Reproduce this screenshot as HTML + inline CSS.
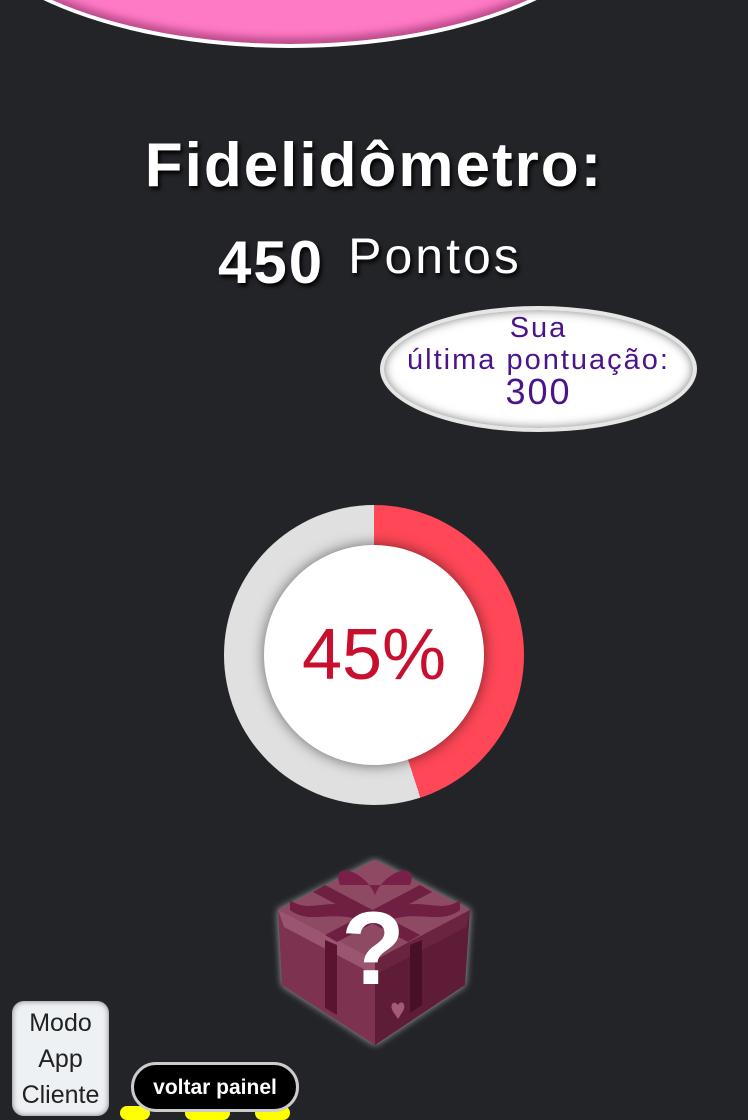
<!DOCTYPE html>
<html><head><meta charset="utf-8"><style>
html,body{margin:0;padding:0;}
body{width:748px;height:1116px;background:#232428;position:relative;overflow:hidden;font-family:"Liberation Sans",sans-serif;}
.pink{position:absolute;left:-50px;top:-260px;width:680px;height:308px;border-radius:50%;background:#ff7ac5;border:4px solid #fff;box-sizing:border-box;box-shadow:inset 0 -6px 8px rgba(120,30,80,.5);}
.t1{position:absolute;left:0;width:748px;top:130px;text-align:center;color:#fff;font-size:62px;font-weight:bold;text-shadow:2px 3px 4px #000;letter-spacing:2px;}
.t2{position:absolute;left:218px;top:228px;color:#fff;text-shadow:2px 3px 4px #000;white-space:nowrap;}
.t2 b{font-size:60px;letter-spacing:2px;}
.t2 span{font-size:50px;margin-left:24px;position:relative;top:-10px;letter-spacing:3px;}
.bub{position:absolute;left:380px;top:306px;width:317px;height:126px;border-radius:50%;background:#fff;border:4px solid #e6e6e6;box-sizing:border-box;box-shadow:inset 0 0 10px rgba(0,0,0,.5);color:#4a148c;text-align:center;font-size:29px;line-height:32px;padding-top:2px;letter-spacing:2px;white-space:nowrap;}
.bub b{font-size:36px;font-weight:normal;}
.ring{position:absolute;left:224px;top:505px;width:300px;height:300px;border-radius:50%;background:conic-gradient(#ff4757 0deg 162deg,#e0e0e0 162deg 360deg);}
.inner{position:absolute;left:40px;top:40px;width:220px;height:220px;border-radius:50%;background:#fff;box-shadow:0 0 14px rgba(0,0,0,.55);text-align:center;line-height:220px;color:#c8102e;font-size:72px;}
.modo{position:absolute;left:12px;top:1001px;width:97px;height:115px;background:#eef1f3;border-radius:12px;box-shadow:inset 0 0 6px rgba(0,0,0,.5);text-align:center;font-size:25px;line-height:36px;color:#222;padding-top:4px;box-sizing:border-box;}
.volt{position:absolute;left:131px;top:1062px;width:168px;height:50px;background:#000;border:3px solid #ccc;border-radius:25px;box-sizing:border-box;color:#fff;font-weight:bold;font-size:21px;text-align:center;line-height:46px;}
.yel{position:absolute;top:1106px;height:14px;background:#ff0;border-radius:8px;}
</style></head><body>
<div class="pink"></div>
<div class="t1">Fidelidômetro:</div>
<div class="t2"><b>450</b><span>Pontos</span></div>
<div class="bub">Sua<br>última pontuação:<br><b>300</b></div>
<div class="ring"><div class="inner">45%</div></div>
<svg style="position:absolute;left:270px;top:855px" width="210" height="200" viewBox="0 0 210 200">
<defs><filter id="g"><feGaussianBlur stdDeviation="4"/></filter></defs>
<g filter="url(#g)" opacity=".8"><polygon points="105,5 200,55 195,130 105,190 12,130 8,55" fill="#ccc"/></g>
<polygon points="105,5 200,55 105,105 8,55" fill="#8e4a62"/>
<polygon points="8,55 105,105 105,190 12,130" fill="#7d3350"/>
<polygon points="105,105 200,55 195,130 105,190" fill="#5e1c36"/>
<polygon points="14,72 105,120 105,105 8,55" fill="#9a5570"/>
<polygon points="105,120 196,72 200,55 105,105" fill="#6b2440"/>
<polygon points="55,30 150,80 138,87 43,37" fill="#6e1f42"/>
<polygon points="150,30 55,80 67,87 162,37" fill="#6e1f42"/>
<polygon points="55,85 67,90 67,160 55,153" fill="#5a1432"/>
<polygon points="140,90 152,85 152,150 140,158" fill="#4a0f28"/>
<path d="M70,30 C60,5 95,15 105,40 C115,15 150,5 140,30 Z" fill="#7a1f48"/>
<path d="M20,45 C40,60 60,40 90,55 L90,65 C60,55 40,70 20,55Z M190,45 C170,60 150,40 120,55 L120,65 C150,55 170,70 190,55Z" fill="#6e1f42"/>
<path d="M128,150 c-4,-6 -10,0 -4,8 l4,6 l5,-8 c4,-7 -2,-12 -5,-6z" fill="#a25a78"/>
<text x="103" y="129" text-anchor="middle" font-family="Liberation Sans,sans-serif" font-weight="bold" font-size="104" fill="#fff">?</text>
</svg>
<div class="yel" style="left:120px;width:30px"></div>
<div class="yel" style="left:185px;width:45px"></div>
<div class="yel" style="left:255px;width:35px"></div>
<div class="modo">Modo<br>App<br>Cliente</div>
<div class="volt">voltar painel</div>
</body></html>
